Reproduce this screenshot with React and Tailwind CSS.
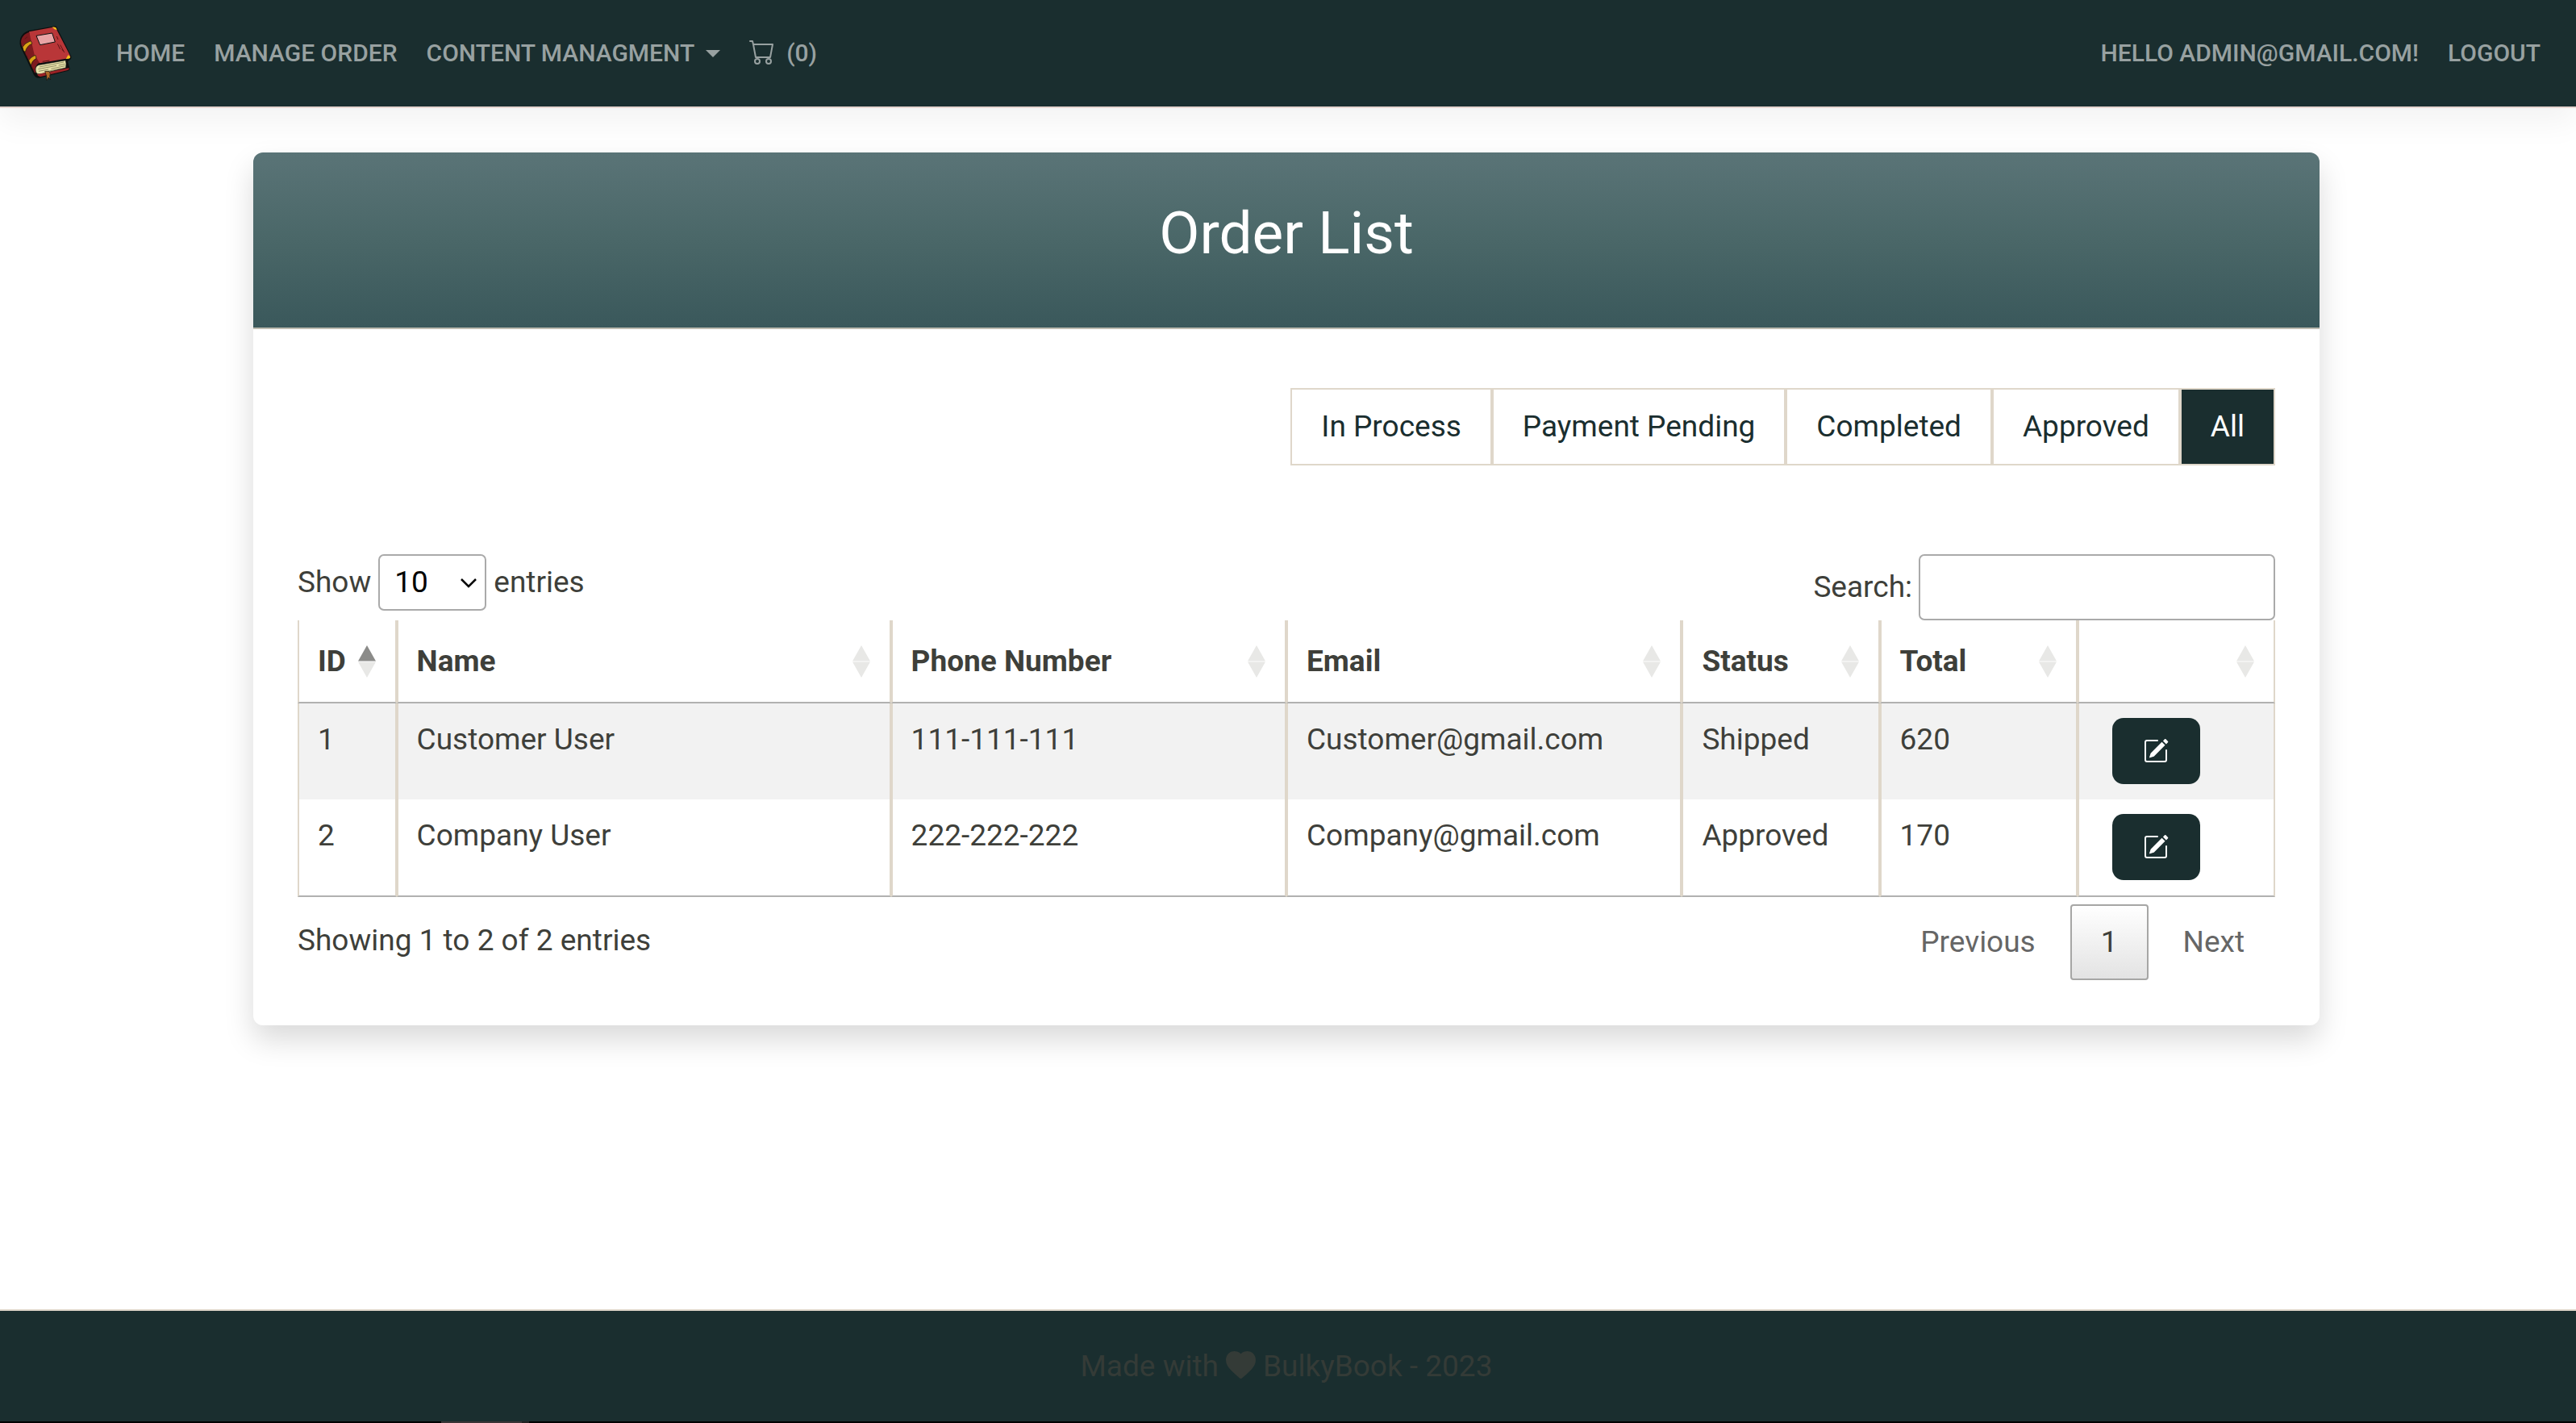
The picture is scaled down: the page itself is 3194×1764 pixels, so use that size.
import React from "react";
import { BsCart, BsPencilSquare } from "react-icons/bs";

const filters = ["In Process", "Payment Pending", "Completed", "Approved", "All"];

const columns = [
  { label: "ID", width: "w-[5%]", sorted: true },
  { label: "Name", width: "w-[25%]" },
  { label: "Phone Number", width: "w-[20%]" },
  { label: "Email", width: "w-[20%]" },
  { label: "Status", width: "w-[10%]" },
  { label: "Total", width: "w-[10%]" },
  { label: "", width: "w-[10%]" },
];

const orders = [
  { id: 1, name: "Customer User", phone: "111-111-111", email: "Customer@gmail.com", status: "Shipped", total: 620 },
  { id: 2, name: "Company User", phone: "222-222-222", email: "Company@gmail.com", status: "Approved", total: 170 },
];

function BookLogo() {
  return (
    <svg viewBox="36 36 204 210" className="h-[70px] w-[68px]" aria-hidden="true">
      <path d="M44 94C46 76 58 64 76 57L166 41Q178 38 181 44L234 150Q238 160 230 166L222 172L229 196Q232 202 224 206L122 232Q104 236 96 222L46 116Q42 106 44 94Z" fill="#0c0f0f" />
      <path d="M48 98C50 80 62 68 78 63L118 176C106 180 99 192 103 214L99 214L50 112Z" fill="#7d1a1e" />
      <path d="M78 61L164 45Q174 43 178 48L231 150Q233 156 228 159L118 178L98 146Z" fill="#b93638" />
      <path d="M54 118Q60 104 84 95L90 105Q68 114 64 137L57 130Z" fill="#dba215" stroke="#0c0f0f" strokeWidth="2" />
      <path d="M77 168Q84 154 102 148L105 160Q89 168 85 186Z" fill="#dba215" stroke="#0c0f0f" strokeWidth="2" />
      <path d="M164 44Q175 42 179 47L182 55L173 52Z" fill="#f4c21b" />
      <path d="M215 162L224 147L232 155Q231 160 226 161Z" fill="#f4c21b" />
      <path d="M105 76L164 66L175 99L119 110Z" fill="#e9a3a5" stroke="#0c0f0f" strokeWidth="3" />
      <path d="M104 212C98 194 106 184 124 183L214 167Q218 178 215 195L122 218Q108 221 104 212Z" fill="#e6e0a9" stroke="#0c0f0f" strokeWidth="2" />
      <path d="M116 192L208 174M112 200L180 187M188 186L212 181M114 208L150 201M160 199L212 188M140 210L196 198" stroke="#6b6844" strokeWidth="2" fill="none" />
      <path d="M108 220L218 197L227 196Q228 202 222 204L122 228Q112 230 108 220Z" fill="#9c2226" />
      <path d="M137 208L152 208Q160 216 155 226L158 240L151 231L144 242L143 226Z" fill="#b0692a" stroke="#0c0f0f" strokeWidth="2" />
      <path d="M181 78L186 90M184 106L194 126M194 110L206 132M200 126L210 138M128 172L154 168M62 88L72 80M66 146L72 154M90 194L96 204" stroke="#5c1416" strokeWidth="3" fill="none" />
    </svg>
  );
}

function SortIcon({ sorted }) {
  return (
    <svg viewBox="0 0 22 40" className="h-10 w-[22px] shrink-0" aria-hidden="true">
      <path d="M11 0L22 19.5H0Z" fill={sorted ? "#8b8b89" : "#e8e8e6"} />
      <path d="M0 20.5H22L11 40Z" fill="#e8e8e6" />
    </svg>
  );
}

function NavLink({ children }) {
  return (
    <a href="#" className="flex items-center px-[18px]">
      {children}
    </a>
  );
}

export default function App() {
  return (
    <div className="flex min-h-screen flex-col bg-white font-['Roboto',sans-serif] text-[37px] leading-[54px] text-[#3e3f3a]">
      <header className="border-b-2 border-[#e6d5d0] bg-[#1a2e2f] shadow-[0_18px_36px_rgba(0,0,0,0.05)]">
        <nav className="flex h-[132px] items-center pr-[26px] pl-[22px] text-[30px] leading-[48px] font-medium text-[#98a1a1]">
          <a href="#" aria-label="BulkyBook" className="mr-9">
            <BookLogo />
          </a>
          <NavLink>HOME</NavLink>
          <NavLink>MANAGE ORDER</NavLink>
          <button type="button" className="flex items-center px-[18px]">
            CONTENT MANAGMENT
            <svg viewBox="0 0 18 9" className="ml-[14px] h-[9px] w-[18px]" aria-hidden="true">
              <path d="M0 0H18L9 9Z" fill="currentColor" />
            </svg>
          </button>
          <NavLink>
            <BsCart className="mr-[14px] mb-1 h-8 w-8" />
            (0)
          </NavLink>
          <div className="ml-auto flex">
            <NavLink>HELLO ADMIN@GMAIL.COM!</NavLink>
            <NavLink>LOGOUT</NavLink>
          </div>
        </nav>
      </header>

      <main className="grow pt-[55px] pr-1 pb-20">
        <section className="mx-auto w-full max-w-[2562px] rounded-xl shadow-[0_18px_36px_rgba(0,0,0,0.15)]">
          <div className="rounded-t-xl border-b-2 border-[#bdbbb0] bg-linear-to-b from-[#5a7477] via-[#4a6768] to-[#3a585b] pt-[57px] pb-[74px]">
            <h1 className="text-center text-[73px] leading-[86px] font-normal text-white">Order List</h1>
          </div>

          <div className="px-[55px] pt-[73px] pb-14">
            <div className="mb-[110px] flex justify-end">
              {filters.map((name) => (
                <a
                  key={name}
                  href="#"
                  className={
                    name === "All"
                      ? "border-2 border-[#dfd7ca] bg-[#1a2e2f] px-9 py-[19px] text-white"
                      : "border-2 border-[#dfd7ca] px-9 py-[19px] text-[#1a2e2f]"
                  }
                >
                  {name}
                </a>
              ))}
            </div>

            <div className="flex items-start justify-between">
              <label className="flex items-center">
                Show
                <span className="relative mx-[9px] block">
                  <select defaultValue="10" className="block h-[70px] w-[134px] appearance-none rounded-[7px] border-2 border-[#aaa] bg-white px-[18px] text-black">
                    <option>10</option>
                    <option>25</option>
                    <option>50</option>
                    <option>100</option>
                  </select>
                  <svg viewBox="0 0 20 12" className="pointer-events-none absolute top-[30px] right-3 h-3 w-5" aria-hidden="true">
                    <path d="M1 1L10 10L19 1" fill="none" stroke="#000" strokeWidth="2.5" />
                  </svg>
                </span>
                entries
              </label>
              <label className="flex items-center">
                Search:
                <input type="search" className="ml-2 h-[82px] w-[442px] rounded-[7px] border-2 border-[#aaa] bg-white px-3" />
              </label>
            </div>

            <table className="w-full table-fixed border-separate border-spacing-0 text-left">
              <thead>
                <tr>
                  {columns.map((column, index) => (
                    <th
                      key={index}
                      scope="col"
                      className={`${column.width} h-[103px] border-x-2 border-b-2 border-x-[#dfd7ca] border-b-[#b1b1b0] p-0 font-bold`}
                    >
                      <button type="button" aria-label={column.label || "Actions"} className="flex w-full items-center justify-between pr-6 pl-[23px]">
                        <span>{column.label}</span>
                        <SortIcon sorted={column.sorted} />
                      </button>
                    </th>
                  ))}
                </tr>
              </thead>
              <tbody className="[&>tr:last-child>td]:border-b-2">
                {orders.map((order) => (
                  <tr key={order.id} className="odd:bg-[#f2f2f2] [&>td]:border-x-2 [&>td]:border-x-[#dfd7ca] [&>td]:border-b-[#b1b1b0] [&>td]:px-[23px] [&>td]:pt-[18px] [&>td]:pb-[19px] [&>td]:align-top">
                    <td>{order.id}</td>
                    <td>{order.name}</td>
                    <td>{order.phone}</td>
                    <td>{order.email}</td>
                    <td>{order.status}</td>
                    <td>{order.total}</td>
                    <td>
                      <a href="#" aria-label={`Edit order ${order.id}`} className="ml-[18px] flex h-[82px] w-[109px] items-center justify-center rounded-[14px] bg-[#1a2e2f] text-white">
                        <BsPencilSquare className="h-8 w-8" />
                      </a>
                    </td>
                  </tr>
                ))}
              </tbody>
            </table>

            <div className="flex items-start justify-between">
              <p className="pt-[27px]">Showing 1 to 2 of 2 entries</p>
              <div className="flex gap-[5px] pt-[9px]">
                <button type="button" className="border-2 border-transparent px-9 py-[18px] text-[#666]">Previous</button>
                <button type="button" className="rounded-[4px] border-2 border-[#a6a6a5] bg-linear-to-b from-white to-[#e3e3e3] px-9 py-[18px]">1</button>
                <button type="button" className="border-2 border-transparent px-9 py-[18px] text-[#666]">Next</button>
              </div>
            </div>
          </div>
        </section>
      </main>

      <footer className="border-t-2 border-[#dfd7ca] bg-[#1a2e2f] pt-[42px] pr-1 pb-[41px] text-[#343b37]">
        <p className="flex items-center justify-center">
          Made with
          <svg viewBox="0 0 37 34" className="mx-[9px] mb-1 h-[34px] w-[37px]" aria-hidden="true">
            <path d="M18.500 3.200C16.500 1 13.500 0 10.500 0C4.500 0 0 4.500 0 11C0 20 9 26 16.500 33Q18.500 34.800 20.500 33C28 26 37 20 37 11C37 4.500 32.500 0 26.500 0C23.500 0 20.500 1 18.500 3.200Z" fill="currentColor" />
          </svg>
          BulkyBook - 2023
        </p>
      </footer>
      <div className="flex h-[2px] bg-black pl-[547px]">
        <div className="w-[100px] bg-[#3a3637]" />
        <div className="w-[9px] bg-[#222]" />
      </div>
    </div>
  );
}
